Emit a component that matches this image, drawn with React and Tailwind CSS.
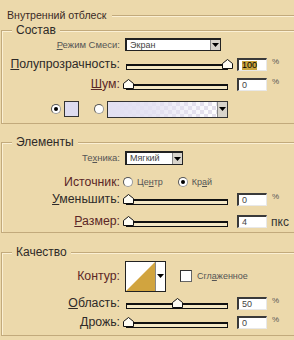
import React from 'react';

const BG = 'bg-[#ecd9ab]';

function Thumb({ left }) {
  return (
    <svg className={`absolute top-[1px] ${left}`} width="11" height="10" viewBox="0 0 11 10">
      <path d="M0.5 4.5 L5.5 0.5 L10.5 4.5 V9.5 H0.5 Z" fill="#fffdf4" stroke="#111" strokeWidth="1" />
    </svg>
  );
}

function Slider({ thumb }) {
  return (
    <div className="relative ml-[5px] w-[102px] h-[13px] flex items-end pb-[1px]">
      <div className="w-full h-[6px] border border-[#111] border-t-2 bg-[#f4e8c6]" />
      <Thumb left={thumb} />
    </div>
  );
}

function Field({ value, selected }) {
  return (
    <div className="ml-[9px] w-[30px] h-[13px] bg-white border-t-2 border-l-2 border-[#3a3a3a] border-r border-b border-r-[#e8e8e8] border-b-[#e8e8e8] flex items-center pl-[3px]">
      <span className={`text-[9px] leading-[9px] text-[#444] ${selected ? 'bg-[#c9a53e] text-black' : ''}`}>{value}</span>
    </div>
  );
}

function Label({ children, big, red }) {
  return (
    <div className={`w-[119px] shrink-0 text-right pr-[1px] ${big ? 'text-[12.3px] leading-[13px]' : 'text-[9.5px] leading-[10px] text-[#555]'} ${red ? 'text-[#5a2626]' : big ? 'text-[#2e2a28]' : ''}`}>
      {children}
    </div>
  );
}

function Radio({ checked }) {
  return (
    <div className="w-[10px] h-[10px] rounded-full bg-white border border-[#9a9a9a] border-t-[#555] border-l-[#555] flex items-center justify-center">
      {checked && <div className="w-[4px] h-[4px] rounded-full bg-black" />}
    </div>
  );
}

function Arrow() {
  return (
    <svg width="7" height="4" viewBox="0 0 7 4">
      <path d="M0 0 H7 L3.5 4 Z" fill="#000" />
    </svg>
  );
}

function SliderRow({ label, value, thumb, unit = '%', red, selected, cls }) {
  return (
    <div className={`flex items-center h-[13px] ${cls}`}>
      <Label big red={red}>{label}</Label>
      <Slider thumb={thumb} />
      <Field value={value} selected={selected} />
      {unit === '%' ? (
        <span className="ml-[5px] self-start text-[8px] leading-[8px] text-[#555]">%</span>
      ) : (
        <span className="ml-[4px] text-[12px] leading-[12px] text-[#333]">{unit}</span>
      )}
    </div>
  );
}

function Group({ title, cls, children }) {
  return (
    <fieldset className={`ml-[1px] w-[320px] border border-[#c2aa7c] shadow-[inset_1px_1px_0_#fbf0d4] ${cls}`}>
      <legend className={`ml-[10px] px-[4px] text-[12px] leading-[16px] text-[#2e2a28] ${BG}`}>{title}</legend>
      {children}
    </fieldset>
  );
}

export default function App() {
  return (
    <div className={`w-[294px] h-[340px] overflow-hidden ${BG} font-['Liberation_Sans',Arial,sans-serif]`}>
      {/* header */}
      <div className="flex items-center h-[14px] mt-[8px]">
        <span className="ml-[7px] text-[10.6px] leading-[14px] text-[#3a2a26]">Внутренний отблеск</span>
        <div className="flex-1 ml-[6px] border-t border-[#c2aa7c] shadow-[0_1px_0_#fbf0d4]" />
      </div>

      <Group title="Состав" cls="pb-[6px]">
        <div className="flex items-center h-[13px]">
          <Label><span className="underline">Р</span>ежим Смеси:</Label>
          <div className="ml-[4px] w-[96px] h-[13px] bg-white border-t-2 border-l-2 border-[#222] border-r border-b flex items-center justify-between">
            <span className="ml-[3px] text-[9px] leading-[9px] text-[#444]">Экран</span>
            <div className="w-[10px] h-full bg-[#d8d4cc] border-l border-[#888] flex items-center justify-center"><Arrow /></div>
          </div>
        </div>
        <SliderRow cls="mt-[7px]" label={<><span className="underline">П</span>олупрозрачность:</>} value="100" thumb="left-[96px]" selected />
        <SliderRow cls="mt-[7px]" red label={<><span className="underline">Ш</span>ум:</>} value="0" thumb="left-[-3px]" />
        <div className="flex items-center h-[16px] mt-[10px]">
          <div className="ml-[49px]"><Radio checked /></div>
          <div className="ml-[3px] w-[15px] h-[16px] bg-[#dedcf0] border border-[#333]" />
          <div className="ml-[15px]"><Radio /></div>
          <div className="ml-[3px] w-[121px] h-[17px] border border-[#333] flex bg-[linear-gradient(45deg,#e4e0ec_25%,transparent_25%,transparent_75%,#e4e0ec_75%),linear-gradient(45deg,#e4e0ec_25%,#fff_25%,#fff_75%,#e4e0ec_75%)] bg-[length:8px_8px] bg-[position:0_0,4px_4px]">
            <div className="flex-1 bg-[linear-gradient(90deg,#e2e0f2_0%,rgba(226,224,242,0.85)_40%,rgba(255,255,255,0)_100%)]" />
            <div className="w-[10px] bg-[#d8d4cc] border-l border-[#888] flex items-center justify-center"><Arrow /></div>
          </div>
        </div>
      </Group>

      <Group title="Элементы" cls="mt-[10px] pb-[4px]">
        <div className="flex items-center h-[14px] mt-[1px]">
          <Label>Те<span className="underline">х</span>ника:</Label>
          <div className="ml-[4px] w-[58px] h-[14px] bg-white border-t-2 border-l-2 border-[#222] border-r border-b flex items-center justify-between">
            <span className="ml-[3px] text-[9px] leading-[9px] text-[#444]">Мягкий</span>
            <div className="w-[10px] h-full bg-[#d8d4cc] border-l border-[#888] flex items-center justify-center"><Arrow /></div>
          </div>
        </div>
        <div className="flex items-center h-[14px] mt-[10px]">
          <Label big red>Источник:</Label>
          <div className="ml-[2px]"><Radio /></div>
          <span className="ml-[4px] text-[9px] leading-[9px] text-[#555]">Це<span className="underline">н</span>тр</span>
          <div className="ml-[15px]"><Radio checked /></div>
          <span className="ml-[4px] text-[9px] leading-[9px] text-[#555]">Кр<span className="underline">а</span>й</span>
        </div>
        <SliderRow cls="mt-[4px]" label={<><span className="underline">У</span>меньшить:</>} value="0" thumb="left-[-3px]" />
        <SliderRow cls="mt-[9px]" red label={<><span className="underline">Р</span>азмер:</>} value="4" thumb="left-[-3px]" unit="пкс" />
      </Group>

      <Group title="Качество" cls="mt-[11px] pb-[6px]">
        <div className="flex items-center h-[30px] mt-[1px]">
          <Label big red>Контур:</Label>
          <div className="ml-[4px] w-[41px] h-[31px] bg-white border border-[#222] flex">
            <svg className="flex-1" viewBox="0 0 30 29" preserveAspectRatio="none">
              <path d="M0 29 L30 0 V29 Z" fill="#d1a43f" />
            </svg>
            <div className="w-[10px] border-l border-[#888] flex items-center justify-center"><Arrow /></div>
          </div>
          <div className="ml-[14px] w-[12px] h-[12px] bg-white border border-[#666] border-t-[#333] border-l-[#333]" />
          <span className="ml-[5px] text-[9px] leading-[9px] text-[#555]">Сгл<span className="underline">а</span>женное</span>
        </div>
        <SliderRow cls="mt-[6px]" label={<><span className="underline">О</span>бласть:</>} value="50" thumb="left-[46px]" />
        <SliderRow cls="mt-[6px]" label={<><span className="underline">Д</span>рожь:</>} value="0" thumb="left-[-3px]" />
      </Group>
    </div>
  );
}
